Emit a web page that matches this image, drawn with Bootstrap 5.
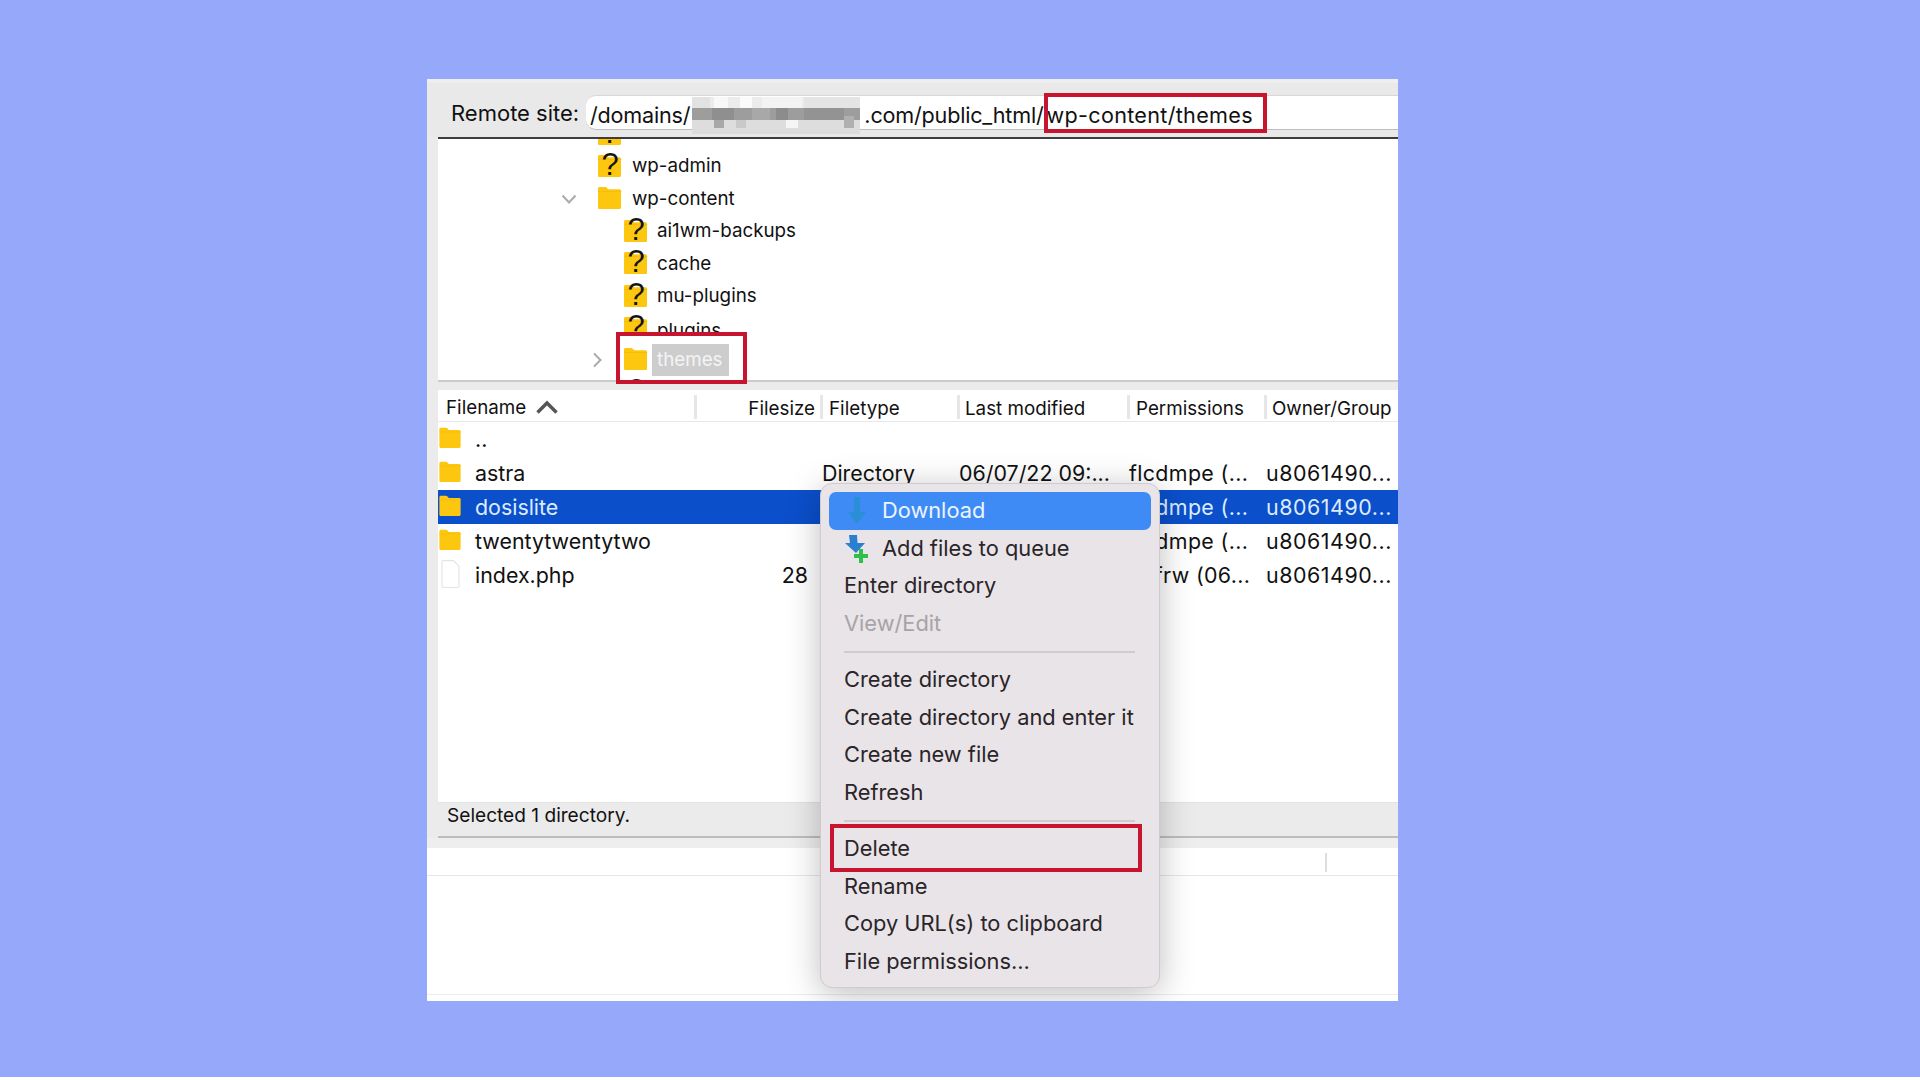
<!doctype html>
<html lang="en">
<head>
<meta charset="utf-8">
<title>FileZilla remote site</title>
<link href="https://cdn.jsdelivr.net/npm/bootstrap@5.3.0/dist/css/bootstrap.min.css" rel="stylesheet">
<style>
body{margin:0;background:#fff;font-family:Inter,"Liberation Sans",sans-serif;color:#111}
.stage{height:1077px;background:#95a8f9;padding:79px 0 0 427px;overflow:hidden}
.fzwin{width:971px;height:922px;background:#fff;position:relative;overflow:hidden}
.fztop{height:58px;background:#e9e9e9;padding:12px 0 8px 12px;border-top:4px solid #eeeeee}
.fzlabel{width:147px;padding:3px 0 0 12px;font-size:22px;line-height:30px;flex:none}
.fzpath{flex:1;background:#fff;border-top:1px solid #d8d8d8;border-bottom:1px solid #bdbdbd;border-radius:10px 0 0 10px;font-size:21.6px;letter-spacing:-.2px;line-height:38px;padding-left:4px;white-space:nowrap;height:35px}
.fzblur{display:inline-block;vertical-align:top;margin:1px 4px 0 2px}
.fztail{letter-spacing:.3px;margin-left:3px}
.fzpanes{padding-left:11px;background:#ebebeb}
.fztree{height:245px;background:#fff;border-top:2px solid #3d3d3d;border-bottom:2px solid #cbcbcb;overflow:hidden;font-size:18.8px}
.fztree-in{margin-top:-21px}
.trow{height:32.4px;display:flex;align-items:center;white-space:nowrap}
.trow svg.fic{flex:none;width:25px;height:26px;margin-top:-3px;overflow:visible}
.tlv1{padding-left:159px}.tlv2{padding-left:185px}
.tlv1 svg.fic{margin-right:10px}.tlv2 svg.fic{margin-right:9px}
.tcut{height:21px;margin-bottom:10.4px;overflow:hidden;align-items:flex-start;padding-top:5px}
.tchev{position:relative;flex:none;width:20px;height:16px}
.tchev-open{margin-left:-38px;margin-right:18px}
.tchev-shut{margin-left:-36px;margin-right:16px}
.thigh{background:#cdcdcd;color:#f4f4f4;padding:0 6px 0 5px;margin-left:-5px;height:32px;line-height:32px}
.fzgap{height:8px;background:#ebebeb}
.fzhead{height:32px;background:#fff;border-bottom:1px solid #e8e8e8;font-size:18.8px;line-height:27px;display:flex;padding-top:5px}
.fzlist{height:380px;background:#fff;font-size:21.4px}
.frow{height:34px;display:flex;align-items:center;white-space:nowrap}
.frow.sel{background:#0b4fcb;color:#dcecff}
.c1{width:256px;flex:none;display:flex;align-items:center}
.c2{width:126px;flex:none;text-align:right}
.c3{width:137px;flex:none}.c4{width:170px;flex:none}.c5{width:137px;flex:none}.c6{width:133px;flex:none}
.fzhead>div{border-left:3px solid #e6e6e6;padding-left:6px;height:24px}
.fzhead>div.c1{border-left:0;padding-left:8px}
.fzhead>div.c2{padding-right:5px}
.fzhead>div.c3{padding-left:6px}
.fzhead>div.c4{padding-left:5px}
.fzhead>div.c6{padding-left:5px}
.frow .c2{padding-right:12px}
.frow .c3,.frow .c4,.frow .c5,.frow .c6{padding-left:2px}
.frow .c5{letter-spacing:.35px}
.frow .c6{letter-spacing:.55px}
.frow svg.fic{width:24px;height:24px;margin-right:13px;margin-top:-4px;flex:none}
.frow svg.fdoc{width:24px;height:28px;margin-top:-2px}
.fzcaret{margin-left:9px}
.fzstatus{height:36px;background:#ebebeb;border-top:1px solid #e2e2e2;border-bottom:2px solid #bdbdbd;font-size:19.1px;line-height:22px;padding:1px 0 0 9px}
.fzgap2{height:10px;background:#eeeeee}
.fzlog{height:28px;border-bottom:1px solid #e6e6e6;background:#fff}
.fztick{width:2px;height:19px;background:#dedede;margin-left:898px;position:relative;top:5px}
.fzend{height:119px;border-bottom:1px solid #ececec;background:#fff}
.fzmenu.dropdown-menu{display:block;position:absolute;left:393px;top:404px;width:340px;height:505px;margin:0;padding:8px 0 0;background:#e9e4e8;border:1px solid #cfcbce;border-radius:12px;box-shadow:0 6px 34px rgba(0,0,0,.26);font-size:21.8px;color:#2a2528}
.fzmenu .dropdown-item{height:37.6px;line-height:37px;padding:0 0 0 23px;color:#2a2528;display:flex;align-items:center;position:relative;background:transparent;white-space:nowrap}
.fzmenu .dropdown-item.active{background:#3f8bf6;color:#eaf5ff;margin:0 8px;width:322px;border-radius:7px;padding-left:15px}
.fzmenu .dropdown-item.disabled{color:#a7a3a6}
.fzmenu .dropdown-divider{margin:8.3px 24px 8.3px 23px;border-top:2px solid #cfcbce;opacity:1;height:1px}
.mic{width:26px;height:30px;flex:none;margin-right:12px}
.redbox{position:absolute;border:4px solid #c8152f;pointer-events:none;z-index:1001}
.rb1{left:617px;top:14px;width:223px;height:40px}
.rb2{left:189px;top:253px;width:131px;height:52px}
.rb3{left:403px;top:745px;width:312px;height:48px}
</style>
</head>
<body>
<svg width="0" height="0" class="position-absolute">
<symbol id="folder" viewBox="0 0 25 26"><path d="M1 8.200V4.600C1 3.600 1.700 3 2.600 3h5.600c.8 0 1.200.3 1.800 1l1.200 1.300h11.200c1 0 1.600.7 1.600 1.600v16.500c0 1-.7 1.600-1.600 1.600H2.600C1.700 25 1 24.400 1 23.400z" fill="#fcc70e"/><path d="M1 7.500h23.400" stroke="#f0b90a" stroke-width=".6" fill="none"/></symbol>
<symbol id="qfolder" viewBox="0 0 25 26" overflow="visible"><use href="#folder"/><text x="13" y="22.500" text-anchor="middle" font-family="Liberation Sans,sans-serif" font-size="31" fill="#141414">?</text></symbol>
<symbol id="doc" viewBox="0 0 24 28" preserveAspectRatio="none"><path d="M5.500 .7h10l5.500 5.500v19.800c0 .8-.7 1.500-1.500 1.500h-14c-.8 0-1.500-.7-1.500-1.500V2.200c0-.8.700-1.500 1.500-1.500z" fill="#fff" stroke="#e4e4e4" stroke-width="1.200"/></symbol>
</svg>
<div class="stage">
<div class="fzwin">
  <div class="fztop d-flex">
    <div class="fzlabel">Remote site:</div>
    <div class="fzpath">/domains/<svg class="fzblur" width="168" height="37" viewBox="0 0 168 37"><rect width="168" height="37" fill="#ececec"/><rect x="0" y="0" width="18" height="12" fill="#e2e2e2"/><rect x="22" y="0" width="14" height="12" fill="#f8f8f8"/><rect x="48" y="0" width="12" height="12" fill="#fbfbfb"/><rect x="70" y="0" width="40" height="12" fill="#f3f3f3"/><rect x="112" y="0" width="56" height="12" fill="#e4e4e4"/><rect x="0" y="11" width="168" height="12" fill="#9d9d9d"/><rect x="20" y="11" width="22" height="12" fill="#8f8f8f"/><rect x="84" y="11" width="12" height="12" fill="#8c8c8c"/><rect x="60" y="11" width="18" height="12" fill="#a8a8a8"/><rect x="112" y="11" width="40" height="12" fill="#939393"/><rect x="0" y="23" width="168" height="14" fill="#dddddd"/><rect x="22" y="23" width="10" height="8" fill="#a8a8a8"/><rect x="44" y="23" width="10" height="8" fill="#c9c9c9"/><rect x="94" y="23" width="12" height="8" fill="#f5f5f5"/><rect x="152" y="19" width="10" height="12" fill="#b0b0b0"/></svg>.com/public_html/<span class="fztail">wp-content/themes</span></div>
  </div>
  <div class="fzpanes">
    <div class="fztree">
      <div class="fztree-in">
        <div class="trow tlv1"><svg class="fic"><use href="#qfolder"/></svg></div>
        <div class="trow tlv1"><svg class="fic"><use href="#qfolder"/></svg>wp-admin</div>
        <div class="trow tlv1"><svg class="tchev tchev-open" viewBox="0 0 20 16"><path d="M3.500 4.500l6.500 7 6.500-7" fill="none" stroke="#ababab" stroke-width="2"/></svg><svg class="fic"><use href="#folder"/></svg>wp-content</div>
        <div class="trow tlv2"><svg class="fic"><use href="#qfolder"/></svg>ai1wm-backups</div>
        <div class="trow tlv2"><svg class="fic"><use href="#qfolder"/></svg>cache</div>
        <div class="trow tlv2"><svg class="fic"><use href="#qfolder"/></svg>mu-plugins</div>
        <div class="trow tlv2 tcut"><svg class="fic"><use href="#qfolder"/></svg>plugins</div>
        <div class="trow tlv2"><svg class="tchev tchev-shut" viewBox="0 0 20 16"><path d="M7 1.500l6.500 6.500-6.500 6.500" fill="none" stroke="#ababab" stroke-width="2"/></svg><svg class="fic"><use href="#folder"/></svg><span class="thigh">themes</span></div>
        <div class="trow tlv2"><svg class="fic"><use href="#qfolder"/></svg></div>
      </div>
    </div>
    <div class="fzgap"></div>
    <div class="fzhead">
      <div class="c1">Filename<svg class="fzcaret" width="24" height="18" viewBox="0 0 24 18"><path d="M2.500 14.500L12 5l9.500 9.500" fill="none" stroke="#555" stroke-width="3.400"/></svg></div>
      <div class="c2">Filesize</div>
      <div class="c3">Filetype</div>
      <div class="c4">Last modified</div>
      <div class="c5">Permissions</div>
      <div class="c6">Owner/Group</div>
    </div>
    <div class="fzlist">
      <div class="frow"><div class="c1"><svg class="fic"><use href="#folder"/></svg>..</div></div>
      <div class="frow"><div class="c1"><svg class="fic"><use href="#folder"/></svg>astra</div><div class="c2"></div><div class="c3">Directory</div><div class="c4">06/07/22 09:...</div><div class="c5">flcdmpe (...</div><div class="c6">u8061490...</div></div>
      <div class="frow sel"><div class="c1"><svg class="fic"><use href="#folder"/></svg>dosislite</div><div class="c2"></div><div class="c3"></div><div class="c4"></div><div class="c5">flcdmpe (...</div><div class="c6">u8061490...</div></div>
      <div class="frow"><div class="c1"><svg class="fic"><use href="#folder"/></svg>twentytwentytwo</div><div class="c2"></div><div class="c3"></div><div class="c4"></div><div class="c5">flcdmpe (...</div><div class="c6">u8061490...</div></div>
      <div class="frow"><div class="c1"><svg class="fic fdoc"><use href="#doc"/></svg>index.php</div><div class="c2">28</div><div class="c3"></div><div class="c4"></div><div class="c5">adfrw (06...</div><div class="c6">u8061490...</div></div>
    </div>
    <div class="fzstatus">Selected 1 directory.</div>
  </div>
  <div class="fzgap2"></div>
  <div class="fzlog"><div class="fztick"></div></div>
  <div class="fzend"></div>

  <div class="dropdown-menu fzmenu">
    <a class="dropdown-item active" href="#"><svg class="mic" viewBox="0 0 26 30"><path d="M10 1h6v15h6L13 28 4 16h6z" fill="#2a8fd6"/></svg>Download</a>
    <a class="dropdown-item" href="#"><svg class="mic" viewBox="0 0 26 30"><path d="M5 2h8l.5 8H21l-9 10L1 10h5z" fill="#2a7fd0"/><path d="M15 16h4v5h5v4h-5v5h-4v-5h-5v-4h5z" fill="#2fc04a"/></svg>Add files to queue</a>
    <a class="dropdown-item" href="#">Enter directory</a>
    <a class="dropdown-item disabled" href="#">View/Edit</a>
    <div class="dropdown-divider"></div>
    <a class="dropdown-item" href="#">Create directory</a>
    <a class="dropdown-item" href="#">Create directory and enter it</a>
    <a class="dropdown-item" href="#">Create new file</a>
    <a class="dropdown-item" href="#">Refresh</a>
    <div class="dropdown-divider"></div>
    <a class="dropdown-item" href="#">Delete</a>
    <a class="dropdown-item" href="#">Rename</a>
    <a class="dropdown-item" href="#">Copy URL(s) to clipboard</a>
    <a class="dropdown-item" href="#">File permissions...</a>
  </div>
  <div class="redbox rb1"></div>
  <div class="redbox rb2"></div>
  <div class="redbox rb3"></div>
</div>
</div>
<script src="https://cdn.jsdelivr.net/npm/bootstrap@5.3.0/dist/js/bootstrap.bundle.min.js"></script>
</body>
</html>
